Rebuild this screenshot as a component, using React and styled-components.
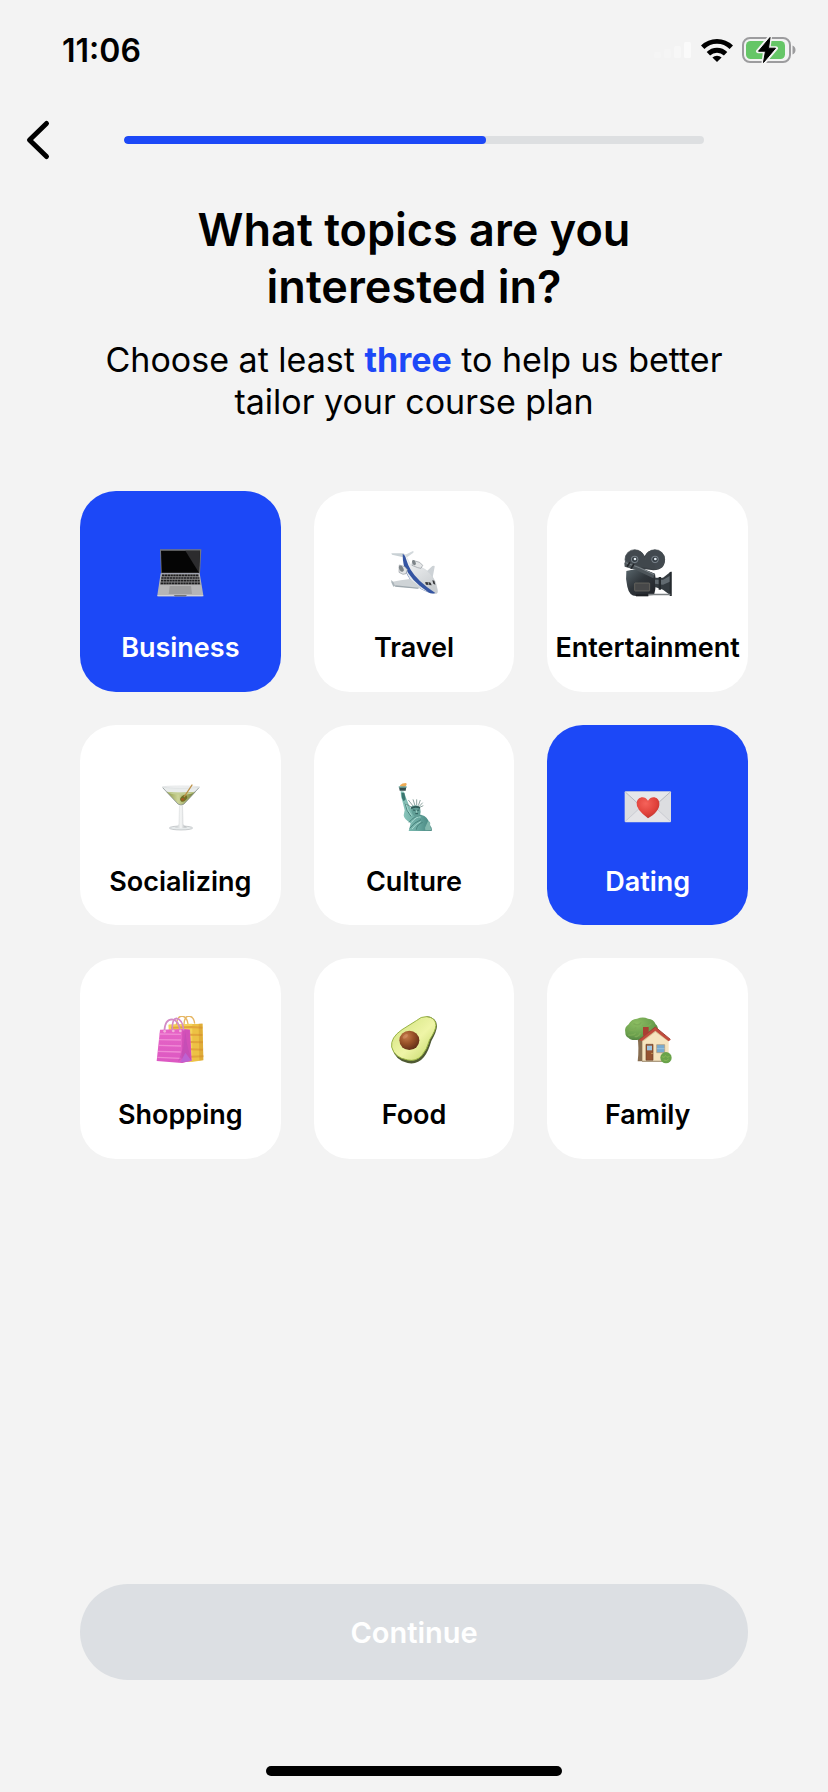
import React, { useState } from 'react';
import styled, { createGlobalStyle } from 'styled-components';

const colors = {
  background: '#f3f3f3',
  blue: '#1c48f7',
  track: '#dddfe1',
  disabled: '#dcdfe3',
  black: '#000',
  white: '#fff',
};

const GlobalStyle = createGlobalStyle`
  * {
    box-sizing: border-box;
  }
  body {
    margin: 0;
    background: ${colors.background};
    color: ${colors.black};
    font-family: Inter, 'Liberation Sans', sans-serif;
  }
  button {
    border: 0;
    padding: 0;
    font-family: inherit;
    cursor: pointer;
  }
`;

const StyledPage = styled.div`
  display: flex;
  flex-direction: column;
  min-height: 100vh;
`;

const StyledStatusBar = styled.div`
  display: flex;
  align-items: center;
  justify-content: space-between;
  height: 100px;
  padding: 0 32px 0 62px;
`;

const StyledTime = styled.time`
  font-size: 32px;
  font-weight: 600;
`;

const StyledIndicators = styled.div`
  display: flex;
  align-items: center;
  gap: 9px;
  svg {
    display: block;
  }
`;

const StyledHeader = styled.header`
  display: grid;
  grid-template-columns: 15% 70% 15%;
  align-items: center;
  height: 80px;
`;

const StyledBack = styled.button`
  display: flex;
  align-items: center;
  width: 80px;
  height: 60px;
  padding-left: 24px;
  background: none;
`;

const StyledTrack = styled.div`
  height: 8px;
  border-radius: 4px;
  background: ${colors.track};
  overflow: hidden;
`;

const StyledFill = styled.div`
  height: 100%;
  border-radius: 4px;
  background: ${colors.blue};
`;

const StyledMain = styled.main`
  display: flex;
  flex: 1;
  flex-direction: column;
  padding: 21px 80px 0;
  text-align: center;
`;

const StyledTitle = styled.h1`
  margin: 0 auto;
  max-width: 500px;
  font-size: 45px;
  font-weight: 600;
  line-height: 57px;
`;

const StyledSubtitle = styled.p`
  margin: 24px 0 0;
  font-size: 34px;
  line-height: 42px;
  strong {
    color: ${colors.blue};
    font-weight: 700;
  }
`;

const StyledTopics = styled.div`
  display: grid;
  grid-template-columns: repeat(3, minmax(0, 1fr));
  gap: 33px;
  margin-top: 68px;
`;

const StyledTopic = styled.button`
  display: flex;
  flex-direction: column;
  align-items: center;
  gap: 35px;
  aspect-ratio: 1;
  padding-top: 58px;
  border-radius: 36px;
  background: ${({ $selected }) => ($selected ? colors.blue : colors.white)};
  color: ${({ $selected }) => ($selected ? colors.white : colors.black)};
  font-size: 27px;
  font-weight: 600;
  line-height: 32px;
  svg {
    display: block;
    flex: none;
    width: 48px;
    height: 48px;
  }
`;

const StyledFooter = styled.footer`
  padding: 40px 80px 0;
`;

const StyledContinue = styled.button`
  width: 100%;
  height: 96px;
  border-radius: 48px;
  background: ${colors.disabled};
  color: ${colors.white};
  font-size: 29px;
  font-weight: 600;
`;

const StyledHomeIndicator = styled.div`
  width: 296px;
  height: 10px;
  margin: 86px auto 16px;
  border-radius: 5px;
  background: ${colors.black};
`;

const SignalIcon = () => (
  <svg width="38" height="16" viewBox="0 0 38 16" aria-hidden="true">
    <rect x="0" y="10" width="7" height="6" rx="1.5" fill="#f5f5f5" />
    <rect x="10" y="7" width="7" height="9" rx="1.5" fill="#f5f5f5" />
    <rect x="20" y="4" width="7" height="12" rx="1.5" fill="#f7f7f7" />
    <rect x="30" y="0" width="7" height="16" rx="1.5" fill="#fafafa" />
  </svg>
);

const WifiIcon = () => (
  <svg width="32" height="24" viewBox="0 0 32 24" aria-hidden="true">
    <g fill="none" stroke="#000" strokeWidth="4.8">
      <path d="M1.7 9.2a20.3 20.3 0 0 1 28.6 0" />
      <path d="M7.4 15.800a12.2 12.2 0 0 1 17.2 0" />
    </g>
    <path d="M11.4 19.500a6.600 6.600 0 0 1 9.200 0L16 24z" />
  </svg>
);

const BatteryIcon = () => (
  <svg width="54" height="26" viewBox="0 0 54 26" aria-hidden="true">
    <rect x="1" y="1" width="47" height="24" rx="7" fill="none" stroke="#9c9c9e" strokeWidth="2" />
    <path d="M50.5 8.5c4 1.5 4 7.500 0 9z" fill="#9c9c9e" />
    <rect x="4" y="4" width="39" height="18" rx="4.500" fill="#66c667" />
    <path
      d="M28 0 16 14.200h7L21.500 26 34 11.200h-7.500z"
      stroke="#f3f3f3"
      strokeWidth="4"
      strokeLinejoin="round"
    />
    <path d="M28 .5 16.500 14.200h7L21.500 25.500 33.500 11.200h-7z" stroke="#000" strokeLinejoin="round" />
  </svg>
);

const ChevronIcon = () => (
  <svg width="28" height="42" viewBox="0 0 28 42" aria-hidden="true">
    <path
      d="M22.500 4.500 5.500 21l17 16.500"
      fill="none"
      stroke="#000"
      strokeWidth="5"
      strokeLinecap="round"
      strokeLinejoin="round"
    />
  </svg>
);

const LaptopIcon = () => (
  <svg viewBox="259 207 144 144" aria-hidden="true">
    <path d="M271 208h124l-4 73H274z" fill="#77787a" />
    <path d="M274 212h117l-3 66H276z" fill="#050505" />
    <path d="M347 212h44l-3 66z" fill="#2c2c2e" />
    <path d="M273 280h117l11 66q0 3-4 3H267q-4 0-4-3z" fill="#b5b5b7" />
    <path d="M276 283h111l6 31H271z" fill="#8b8b8d" />
    <g stroke="#1d1d1f" strokeWidth="5" strokeDasharray="7 1.500">
      <path d="M277 286h110" />
      <path d="M275 294h114" />
      <path d="M274 302h116" />
      <path d="M273 310h119" />
    </g>
    <path d="M300 318h64l3 24h-70z" fill="#9d9d9f" />
    <path d="M263 346h138v3H263z" fill="#dedee0" />
    <path d="M312 346h40l-4 3h-32z" fill="#555" />
  </svg>
);

const PlaneIcon = () => (
  <svg viewBox="60 57 144 144" aria-hidden="true">
    <defs>
      <linearGradient id="plane-body" x1="0" y1="0" x2="0.6" y2="1">
        <stop offset="0" stopColor="#fafbfc" />
        <stop offset="1" stopColor="#c9cdd0" />
      </linearGradient>
    </defs>
    <path d="M103 76l26-13q3 1 1 5l-22 16z" fill="#d3d9dc" />
    <path d="M64 70l36 0 8 5-8 7-34-8z" fill="#c9d1d5" />
    <path d="M164 130l23-22q8-3 7 2l-7 38z" fill="#cdd2d6" />
    <path
      d="M99 73q7-1 10 6l13 26q8 2 22 4 24 6 40 26 15 19 18 43 3 13-4 13-30-2-58-24-26-20-34-48-8-24-7-46z"
      fill="url(#plane-body)"
      stroke="#c3c9cd"
    />
    <path d="M98 72q7 2 10 14 6 20 14 33 20 34 74 70-10 4-22-2-46-18-63-54-13-27-13-61z" fill="#3555a2" />
    <path d="M105 110q14 38 70 77-48-18-63-54-5-11-7-23z" fill="#e6eaed" />
    <path d="M64 156q28-6 56-9l33 25-7 4q-41-5-75-8z" fill="#ced3d6" />
    <path d="M63 150l7 6 5 12-5 2q-6-9-7-20z" fill="#aab4b9" />
    <path d="M76 166l70 7-3 3-68-6z" fill="#9da7ad" />
    <g stroke="#92999e" strokeWidth="2">
      <path d="M88 105l16 5 8 9-4 12-9 2-12-6z" fill="#e4e6e7" />
      <path d="M128 91l21 6 9 9-5 9-10-2-17-7z" fill="#e4e6e7" />
    </g>
    <ellipse cx="94" cy="116" rx="6" ry="10" transform="rotate(-29 94 116)" fill="#7d8488" />
    <ellipse cx="132" cy="98" rx="5" ry="8" transform="rotate(-25 132 98)" fill="#7d8488" />
    <path d="M165 157q10-3 17 1l3 8-17-2zM187 151l6 1 3 12-6-3z" fill="#35363a" />
    <path d="M174 156l3 10" stroke="#cbd0d3" strokeWidth="2" />
  </svg>
);

const CameraIcon = () => (
  <svg viewBox="281 207 144 144" aria-hidden="true">
    <defs>
      <linearGradient id="camera-body" x1="0" y1="0" x2="1" y2="1">
        <stop offset="0" stopColor="#59666c" />
        <stop offset=".45" stopColor="#30363b" />
        <stop offset="1" stopColor="#202328" />
      </linearGradient>
    </defs>
    <path d="M313 209q20 0 30 19 9-19 30-19a31 31 0 0 1 31 30q0 30-35 32l-53-7a31 31 0 0 1-3-55z" fill="#3a4045" />
    <g fill="#42494f" stroke="#4a5156" strokeWidth="2">
      <circle cx="313" cy="238" r="29" />
      <circle cx="374" cy="238" r="29" />
    </g>
    <path d="M320 240h48l8 28-60-10z" fill="#40474c" />
    <path d="M288 273q37-12 86 8 6 34-3 64l-54 3q-20 0-26-28-6-25-3-47z" fill="url(#camera-body)" />
    <path d="M282 250l4-8 42 18 45 22-4 13-52-25-34-10z" fill="#4e565b" />
    <path d="M286 248l41 15 45 21" fill="none" stroke="#7b8388" strokeWidth="3" />
    <path d="M290 260l9-13M302 266l9-14" stroke="#23272b" strokeWidth="5" />
    <path d="M374 293h24l25-19v74l-25-19-24-8z" fill="#343b40" />
    <path d="M374 299h24l24-13v18l-24 10-24-3z" fill="#616a70" />
    <path d="M418 276h6v72h-6zM385 291h7v38h-7z" fill="#252a2e" />
    <path d="M354 341h66v5h-68z" fill="#7b8082" />
    <rect x="313" y="309" width="45" height="24" rx="2" fill="#474849" stroke="#77726b" strokeWidth="2" />
    <path d="M317 343h37v6h-37z" fill="#1d2023" />
    <g fill="#78828a">
      <circle cx="313" cy="238" r="11" />
      <circle cx="374" cy="238" r="11" />
    </g>
    <g fill="#343c42">
      <circle cx="313" cy="238" r="8" />
      <circle cx="374" cy="238" r="8" />
    </g>
    <g fill="#e4edf3">
      <circle cx="314" cy="237" r="4" />
      <circle cx="375" cy="237" r="4" />
    </g>
  </svg>
);

const CocktailIcon = () => (
  <svg viewBox="49 68 144 144" aria-hidden="true">
    <defs>
      <linearGradient id="cocktail-stem">
        <stop offset="0" stopColor="#b8bdc0" />
        <stop offset=".5" stopColor="#f7f8f8" />
        <stop offset="1" stopColor="#9da3a6" />
      </linearGradient>
      <linearGradient id="cocktail-drink">
        <stop offset="0" stopColor="#8a9640" />
        <stop offset=".4" stopColor="#cdd599" />
        <stop offset="1" stopColor="#6d7a2a" />
      </linearGradient>
    </defs>
    <path d="M68 80h112l-45 50q-11 8-22 0z" fill="#e9ecec" />
    <path d="M80 94q43 5 88 0l-35 37q-9 8-18 0z" fill="url(#cocktail-drink)" />
    <path d="M82 95q43 5 84 0-10 8-42 8-31 0-42-8z" fill="#c4cf95" />
    <path d="M69 82l46 49q9 7 18 0l45-49" fill="none" stroke="#8b9494" strokeWidth="2.500" />
    <ellipse cx="124" cy="80" rx="56" ry="3" fill="#f6f7f7" stroke="#b9bfc1" />
    <ellipse cx="124" cy="203" rx="35" ry="6" fill="#e6eaeb" stroke="#a0a5a8" strokeWidth="1.500" />
    <path d="M118 134q6 4 12 0l1 58q3 6 11 9-18 5-36 0 9-3 11-9z" fill="url(#cocktail-stem)" />
    <ellipse cx="132" cy="114" rx="12" ry="8" fill="#717024" transform="rotate(-42 132 114)" />
    <ellipse cx="129" cy="117" rx="5" ry="4" fill="#a35a22" />
    <path d="M134 109l23-35" stroke="#bd9145" strokeWidth="4" strokeLinecap="round" />
  </svg>
);

const LibertyIcon = () => (
  <svg viewBox="60 68 144 144" aria-hidden="true">
    <defs>
      <linearGradient id="liberty-skin">
        <stop offset="0" stopColor="#8fcabf" />
        <stop offset=".55" stopColor="#68a8a0" />
        <stop offset="1" stopColor="#43827c" />
      </linearGradient>
    </defs>
    <path d="M90 75q6-7 18-7 5 5-3 11-9 2-14-1z" fill="#edaa54" />
    <path d="M87 79h22l-2 12H89z" fill="#324d4d" />
    <path d="M86 78h24v4H86z" fill="#7bb3aa" />
    <path d="M92 92l10 2 6 18 9 23 12 20 24 8 10 4q14 10 18 30 6 5 4 15h-69l6-23q-21-14-21-24l3-15-6-24-5-18z" fill="url(#liberty-skin)" />
    <path d="M94 97l9 1 4 19-6 6-5-9z" fill="#3c7771" />
    <g fill="none" stroke="#4a847d" strokeWidth="3">
      <path d="M105 127q4 26 18 41M117 186q16-20 35-20M119 204q14-19 34-26M139 208q2-16 19-22" />
    </g>
    <g fill="none" stroke="#a6d8cf" strokeWidth="3">
      <path d="M107 127q6 26 18 39M124 187q15-20 28-17M126 206q12-16 26-22" />
    </g>
    <g stroke="#557670" strokeWidth="2">
      <path d="M126 141l-18-10M130 138l-15-19M135 136l-6-19M140 135v-18M145 136l6-17M148 138l10-11M149 141l11-5" />
    </g>
    <path d="M122 140q15-11 28 0l2 15q-2 16-13 15-12-3-14-17z" fill="#619e96" />
    <path d="M123 141q16-8 27-1v5q-17-6-26 2z" fill="#315b58" />
    <path d="M129 149l7 1M142 150l6-1M136 160h8" stroke="#2d5c58" strokeWidth="3" />
    <path d="M139 150l1 7" stroke="#9ccdc2" strokeWidth="3" />
    <path d="M174 182q9 2 6 12l4 16h-18l-1-8z" fill="#82b8ad" />
  </svg>
);

const LoveLetterIcon = () => (
  <svg viewBox="71 68 144 144" aria-hidden="true">
    <defs>
      <radialGradient id="letter-heart" cx=".4" cy=".3" r=".8">
        <stop offset="0" stopColor="#f5625a" />
        <stop offset=".6" stopColor="#e0413a" />
        <stop offset="1" stopColor="#b0312c" />
      </radialGradient>
    </defs>
    <rect x="73" y="93" width="139" height="93" rx="3" fill="#dcdde0" />
    <path d="M74 184l53-49h31l53 49z" fill="#e4e4e7" />
    <path d="M74 184l51-47M211 184l-51-47" stroke="#bfc1c8" strokeWidth="2" />
    <path d="M75 95h135l-48 43q-20 17-40 0z" fill="#e6e7ea" />
    <path d="M75 95l47 43q20 17 40 0l48-43" fill="none" stroke="#9fa2ac" strokeWidth="2" />
    <path d="M143 174q-37-28-34-46c2-19 24-24 34-7 10-17 32-12 34 7 2 19-14 34-34 46z" fill="url(#letter-heart)" />
  </svg>
);

const BagsIcon = () => (
  <svg viewBox="49 49 144 144" aria-hidden="true">
    <defs>
      <linearGradient id="bag-pink" x1="0" y1="0" x2="0" y2="1">
        <stop offset="0" stopColor="#e764c6" />
        <stop offset="1" stopColor="#dc58c2" />
      </linearGradient>
    </defs>
    <path d="M87 75l102-3 2 110-36 5-64-9z" fill="#edc144" />
    <path d="M87 75l71-3v115l-66-9z" fill="#f3d258" />
    <g fill="none" stroke="#e2a53a" strokeWidth="6">
      <path d="M94 84l62-2 32 2M147 105l41 1M149 127l41 1M151 149l39 1M153 171l38-1" />
    </g>
    <path d="M177 72l11-1 3 110-12 2z" fill="#c98a25" opacity=".35" />
    <g fill="none" stroke="#e6b663" strokeWidth="4">
      <path d="M110 76q2-26 17-27 15 2 18 24M133 74q1-25 15-25 15 2 17 23" />
    </g>
    <path d="M61 90l68-2 22 2 5 93-30 7-75-6z" fill="url(#bag-pink)" />
    <g stroke="#ef8ad5" strokeWidth="4">
      <path d="M60 103l64 1M58 120l66 1M56 137l68 2M55 155l68 2M53 173l70 3" />
    </g>
    <path d="M128 89l22 1 5 93-29 6z" fill="#d250b8" />
    <path d="M137 96l-6 50-16 40 26-23 14 20-13-49z" fill="#b94bb4" opacity=".5" />
    <path d="M122 188l15-29 19 25z" fill="#b866d8" opacity=".8" />
    <g fill="none" stroke="#d38bc6" strokeWidth="5">
      <path d="M74 94q2-35 23-35 19 1 25 34" />
      <path d="M98 93q-2-35 12-37 19 3 22 36" />
    </g>
    <g fill="#f2b1d9">
      <circle cx="75" cy="95" r="4" />
      <circle cx="122" cy="94" r="4" />
      <circle cx="101" cy="94" r="4" />
    </g>
  </svg>
);

const AvocadoIcon = () => (
  <svg viewBox="60 49 144 144" aria-hidden="true">
    <defs>
      <linearGradient id="avocado-flesh" x1="0" y1="0" x2="1" y2="1">
        <stop offset="0" stopColor="#cde07a" />
        <stop offset=".55" stopColor="#eff5a7" />
        <stop offset="1" stopColor="#bdd361" />
      </linearGradient>
      <radialGradient id="avocado-pit" cx=".35" cy=".3" r=".75">
        <stop offset="0" stopColor="#c77d4c" />
        <stop offset=".5" stopColor="#985128" />
        <stop offset="1" stopColor="#602d17" />
      </radialGradient>
    </defs>
    <path d="M170 50q30 3 31 29-1 17-17 45-9 32-22 48-20 24-49 18-36-7-46-42z" fill="#4f5a33" />
    <path d="M169 51q27 1 29 26-1 16-19 43-8 30-24 48-17 18-42 13-40-7-48-39-4-28 31-52l43-27q14-13 30-12z" fill="url(#avocado-flesh)" stroke="#98b343" strokeWidth="3" />
    <ellipse cx="118" cy="122" rx="30" ry="29" fill="url(#avocado-pit)" />
    <ellipse cx="106" cy="110" rx="9" ry="5" fill="#e1a17b" opacity=".4" transform="rotate(-35 106 110)" />
  </svg>
);

const HouseIcon = () => (
  <svg viewBox="71 49 144 144" aria-hidden="true">
    <defs>
      <radialGradient id="house-tree" cx=".35" cy=".25" r=".8">
        <stop offset="0" stopColor="#8cbd62" />
        <stop offset=".65" stopColor="#6a9f4d" />
        <stop offset="1" stopColor="#4a7a3f" />
      </radialGradient>
    </defs>
    <path d="M111 108l18 4v73h-17q5-40-1-77z" fill="#876d50" />
    <path d="M75 99q-4-16 10-25 8-16 25-17 18-7 33 0 17 1 23 17 9 7 6 21l-22 21q-19 14-35 4-23 4-31-6-9-4-9-15z" fill="url(#house-tree)" />
    <g fill="none" stroke="#7dac57" strokeWidth="4">
      <path d="M86 90q15 7 21-8M99 72q16 9 24-4M125 76q16 9 28-4M84 106q18 2 22-6M103 111q13 0 17-12" />
    </g>
    <path d="M128 82h17v26h-17z" fill="#aa3f32" />
    <path d="M126 120l39-32 40 32v65h-79z" fill="#f6e4bf" />
    <path d="M126 120l39-32 40 32-3 4-37-27-36 28z" fill="#d9c398" />
    <path d="M117 121l48-39 46 38-6 5-40-32-41 32z" fill="#c24b3c" />
    <path d="M117 120l48-38 45 37" fill="none" stroke="#a04236" strokeWidth="3" />
    <path d="M137 134h21v48h-21z" fill="#965330" stroke="#6d4129" strokeWidth="2" />
    <path d="M140 138h15v14h-15z" fill="#9dc5e1" />
    <circle cx="155" cy="161" r="2" fill="#e1bf6a" />
    <path d="M169 135h24v24h-24z" fill="#78abd0" stroke="#b29775" strokeWidth="2" />
    <path d="M169 147h24" stroke="#a9cee3" strokeWidth="2" />
    <path d="M125 183h80v4h-80z" fill="#ad9c81" />
    <circle cx="197" cy="174" r="17" fill="#6aa34a" />
    <path d="M185 171q8 6 11-4M198 171q7 5 9-2M190 181q10 5 15-3" fill="none" stroke="#89b857" strokeWidth="3" />
  </svg>
);

const topics = [
  { name: 'Business', Icon: LaptopIcon },
  { name: 'Travel', Icon: PlaneIcon },
  { name: 'Entertainment', Icon: CameraIcon },
  { name: 'Socializing', Icon: CocktailIcon },
  { name: 'Culture', Icon: LibertyIcon },
  { name: 'Dating', Icon: LoveLetterIcon },
  { name: 'Shopping', Icon: BagsIcon },
  { name: 'Food', Icon: AvocadoIcon },
  { name: 'Family', Icon: HouseIcon },
];

const REQUIRED_TOPICS = 3;
const progress = 62.5;

const App = () => {
  const [selected, setSelected] = useState(['Business', 'Dating']);

  const toggle = name =>
    setSelected(prev => (prev.includes(name) ? prev.filter(n => n !== name) : [...prev, name]));

  return (
    <>
      <GlobalStyle />
      <StyledPage>
        <StyledStatusBar>
          <StyledTime>11:06</StyledTime>
          <StyledIndicators>
            <SignalIcon />
            <WifiIcon />
            <BatteryIcon />
          </StyledIndicators>
        </StyledStatusBar>

        <StyledHeader>
          <StyledBack type="button" aria-label="Back">
            <ChevronIcon />
          </StyledBack>
          <StyledTrack role="progressbar" aria-label="Progress" aria-valuenow={progress}>
            <StyledFill style={{ width: `${progress}%` }} />
          </StyledTrack>
        </StyledHeader>

        <StyledMain>
          <StyledTitle>What topics are you interested in?</StyledTitle>
          <StyledSubtitle>
            Choose at least <strong>three</strong> to help us better
            <br />
            tailor your course plan
          </StyledSubtitle>
          <StyledTopics>
            {topics.map(({ name, Icon }) => (
              <StyledTopic
                key={name}
                type="button"
                aria-pressed={selected.includes(name)}
                $selected={selected.includes(name)}
                onClick={() => toggle(name)}>
                <Icon />
                <span>{name}</span>
              </StyledTopic>
            ))}
          </StyledTopics>
        </StyledMain>

        <StyledFooter>
          <StyledContinue type="button" aria-disabled={selected.length < REQUIRED_TOPICS}>
            Continue
          </StyledContinue>
        </StyledFooter>
        <StyledHomeIndicator />
      </StyledPage>
    </>
  );
};

export default App;
